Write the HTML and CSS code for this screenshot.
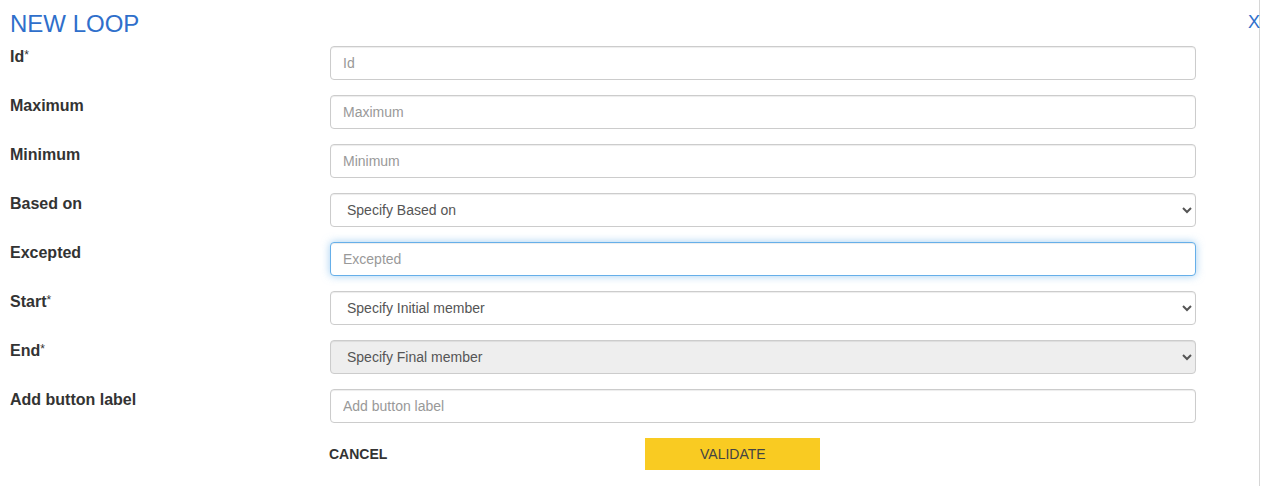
FILE: index.html
```html
<!DOCTYPE html>
<html lang="en">
<head>
<meta charset="utf-8">
<title>New loop</title>
<link rel="stylesheet" href="styles.css">
</head>
<body>
<div class="modal">
  <div class="modal-header">
    <h1 class="modal-title">NEW LOOP</h1>
    <button class="close" type="button">X</button>
  </div>
  <form class="form">
    <label class="label" for="f-id">Id<span class="req">*</span></label>
    <input class="control" id="f-id" type="text" placeholder="Id">

    <label class="label" for="f-max">Maximum</label>
    <input class="control" id="f-max" type="text" placeholder="Maximum">

    <label class="label" for="f-min">Minimum</label>
    <input class="control" id="f-min" type="text" placeholder="Minimum">

    <label class="label" for="f-based">Based on</label>
    <select class="control" id="f-based"><option>Specify Based on</option></select>

    <label class="label" for="f-exc">Excepted</label>
    <input class="control is-focused" id="f-exc" type="text" placeholder="Excepted" autofocus>

    <label class="label" for="f-start">Start<span class="req">*</span></label>
    <select class="control" id="f-start"><option>Specify Initial member</option></select>

    <label class="label" for="f-end">End<span class="req">*</span></label>
    <select class="control" id="f-end" disabled><option>Specify Final member</option></select>

    <label class="label" for="f-add">Add button label</label>
    <input class="control" id="f-add" type="text" placeholder="Add button label">

    <div class="actions">
      <button class="btn-cancel" type="button">CANCEL</button>
      <button class="btn-validate" type="button">VALIDATE</button>
    </div>
  </form>
</div>
</body>
</html>
```

FILE: styles.css
```css
* { box-sizing: border-box; }

html, body {
  margin: 0;
  padding: 0;
  background: #fff;
}

body {
  font-family: "Liberation Sans", Arial, Helvetica, sans-serif;
  color: #333;
  font-size: 14px;
}

.modal {
  width: 1260px;
  min-height: 486px;
  border-right: 1px solid #d6d6d6;
  padding: 10px 0 0 10px;
}

.modal-header {
  display: flex;
  justify-content: space-between;
  align-items: flex-start;
  height: 36px;
}

.modal-title {
  margin: 0;
  font-size: 24px;
  line-height: 27px;
  font-weight: normal;
  color: #2f6fcb;
}

.close {
  border: 0;
  background: transparent;
  padding: 0;
  margin: 2px -1px 0 0;
  font-family: "Liberation Sans", Arial, sans-serif;
  font-size: 18px;
  line-height: 20px;
  color: #2f6fcb;
  cursor: pointer;
}

.form {
  display: grid;
  grid-template-columns: 320px 866px;
  row-gap: 15px;
  margin-top: 0;
}

.label {
  padding-top: 1px;
  font-weight: bold;
  font-size: 16px;
  line-height: 20px;
  color: #333;
}

.req {
  font-weight: normal;
  font-size: 12px;
  vertical-align: 3px;
  line-height: 0;
  color: #333;
}

.control {
  display: block;
  width: 100%;
  height: 34px;
  padding: 6px 12px;
  font-family: "Liberation Sans", Arial, sans-serif;
  font-size: 14px;
  line-height: 1.42857;
  color: #555;
  background: #fff;
  border: 1px solid #ccc;
  border-radius: 4px;
  box-shadow: inset 0 1px 1px rgba(0, 0, 0, 0.075);
  outline: none;
}

.control::placeholder { color: #999; }

.control.is-focused,
.control:focus {
  border-color: #66afe9;
  box-shadow: inset 0 1px 1px rgba(0, 0, 0, 0.075), 0 0 8px rgba(102, 175, 233, 0.6);
}

select.control:disabled {
  background-color: #eee;
  opacity: 1;
  color: #555;
}

.actions {
  grid-column: 2;
  display: flex;
  align-items: center;
  height: 32px;
}

.btn-cancel {
  border: 0;
  background: transparent;
  padding: 0;
  margin-left: -1px;
  font-family: "Liberation Sans", Arial, sans-serif;
  font-weight: bold;
  font-size: 14px;
  color: #333;
}

.btn-validate {
  margin-left: 258px;
  width: 175px;
  height: 32px;
  border: 0;
  background: #f9cb22;
  font-family: "Liberation Sans", Arial, sans-serif;
  font-size: 14px;
  color: #444;
}
```
